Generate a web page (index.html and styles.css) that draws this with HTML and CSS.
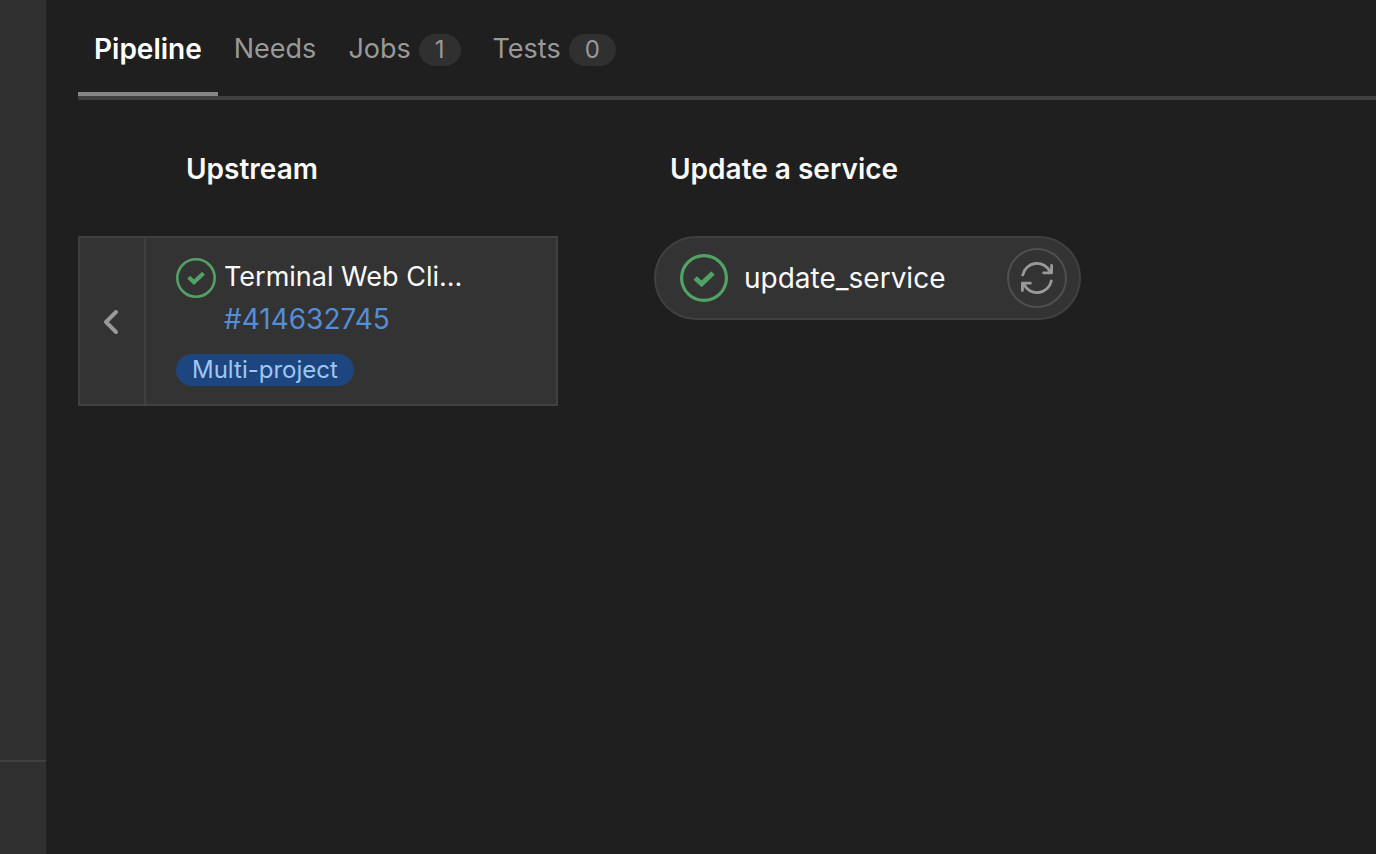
FILE: index.html
```html
<!DOCTYPE html>
<html lang="en">
<head>
<meta charset="utf-8">
<meta name="viewport" content="width=device-width, initial-scale=1">
<title>Pipeline</title>
<link rel="stylesheet" href="styles.css">
</head>
<body>
<div class="layout">
  <aside class="sidebar"><div class="sidebar-footer"></div></aside>
  <main class="content">
    <nav class="tabs" aria-label="Pipeline views">
      <a class="tab tab-active" href="#pipeline" aria-current="page">Pipeline</a>
      <a class="tab" href="#needs">Needs</a>
      <a class="tab" href="#jobs">Jobs<span class="count">1</span></a>
      <a class="tab" href="#tests">Tests<span class="count">0</span></a>
    </nav>
    <div class="graph">
      <section class="column upstream">
        <h2 class="column-title upstream-title">Upstream</h2>
        <div class="card">
          <button class="expand" type="button" aria-label="Expand upstream pipeline">
            <svg width="18" height="28" viewBox="0 0 18 28" fill="none" stroke="currentColor" stroke-width="4" stroke-linecap="round" stroke-linejoin="round" aria-hidden="true"><path d="M13 5 3 15l10 10"/></svg>
          </button>
          <div class="card-body">
            <div class="card-head">
              <svg class="status" width="40" height="40" viewBox="0 0 40 40" fill="none" stroke="currentColor" aria-hidden="true"><circle cx="20" cy="20" r="18.7" stroke-width="2.6"/><path d="m12.7 19.3 5.3 4.9 9.5-9" stroke-width="4.2"/></svg>
              <div class="card-text">
                <span class="card-name">Terminal Web Cli...</span>
                <a class="card-link" href="#414632745">#414632745</a>
              </div>
            </div>
            <span class="badge">Multi-project</span>
          </div>
        </div>
      </section>
      <section class="column stage">
        <h2 class="column-title">Update a service</h2>
        <div class="job">
          <svg class="status" width="48" height="48" viewBox="0 0 48 48" fill="none" stroke="currentColor" aria-hidden="true"><circle cx="24" cy="24" r="22.4" stroke-width="3.2"/><path d="m15.2 24 6.4 5.8 11.4-10.8" stroke-width="5"/></svg>
          <span class="job-name">update_service</span>
          <button class="retry" type="button" aria-label="Retry job">
            <svg width="34" height="34" viewBox="0 0 34 34" fill="none" stroke="currentColor" stroke-width="2.8" stroke-linecap="round" stroke-linejoin="round" aria-hidden="true"><path d="M2.7 14A14.6 14.6 0 0 1 30.2 10.8M31.6 4.4v7.4h-8M31.3 20A14.6 14.6 0 0 1 3.8 23.2M2.4 29.6v-7.4h8"/></svg>
          </button>
        </div>
      </section>
    </div>
  </main>
</div>
</body>
</html>
```
FILE: styles.css
```css
* {
  box-sizing: border-box;
}

body {
  margin: 0;
  background: #1f1f1f;
  color: #fafafa;
  font-family: Inter, "Liberation Sans", sans-serif;
  font-size: 27px;
  line-height: 42px;
}

button {
  margin: 0;
  padding: 0;
  border: 0;
  background: none;
  color: #999;
  cursor: pointer;
}

a {
  text-decoration: none;
}

svg {
  display: block;
  flex: none;
}

.layout {
  display: flex;
  min-height: 100vh;
}

.sidebar {
  display: flex;
  flex: none;
  flex-direction: column;
  justify-content: flex-end;
  width: 46px;
  background: #303030;
}

.sidebar-footer {
  height: 94px;
  border-top: 2px solid #404040;
}

.content {
  flex: 1;
  min-width: 0;
  padding-left: 32px;
}

.tabs {
  display: flex;
  border-bottom: 4px solid #404040;
}

.tab {
  display: flex;
  align-items: center;
  gap: 8px;
  height: 96px;
  padding: 6px 16px 0;
  border-bottom: 4px solid transparent;
  color: #999;
}

.tab-active {
  border-color: #868686;
  color: #fff;
  font-size: 28px;
  font-weight: 600;
}

.count {
  margin-top: 2px;
  padding: 0 16px;
  border-radius: 16px;
  background: #303030;
  font-size: 24px;
  line-height: 32px;
}

.graph {
  display: flex;
  align-items: flex-start;
  gap: 96px;
  padding-top: 48px;
}

.upstream {
  width: 480px;
}

.stage {
  width: 427px;
}

.column-title {
  margin: 0 0 46px;
  padding: 0 16px;
  font-size: 28px;
  font-weight: 600;
}

.upstream-title {
  padding-left: 108px;
}

.card {
  display: flex;
  border: 2px solid #404040;
  background: #333;
}

.expand {
  display: flex;
  align-items: center;
  justify-content: center;
  width: 66px;
  border-right: 2px solid #404040;
}

.card-body {
  flex: 1;
  padding: 18px 30px;
}

.card-head {
  display: flex;
  gap: 8px;
  margin-bottom: 14px;
}

.card-head .status {
  margin-top: 2px;
}

.status {
  color: #52a165;
}

.card-text {
  display: flex;
  flex-direction: column;
}

.card-link {
  color: #548dd8;
  font-size: 28px;
}

.badge {
  display: block;
  width: fit-content;
  padding: 0 16px;
  border-radius: 16px;
  background: #1d4580;
  color: #9dc7f1;
  font-size: 24px;
  line-height: 32px;
}

.job {
  display: flex;
  align-items: center;
  gap: 16px;
  height: 84px;
  padding: 0 12px 0 24px;
  border: 2px solid #404040;
  border-radius: 42px;
  background: #333;
}

.job-name {
  flex: 1;
  font-size: 28px;
}

.retry {
  display: flex;
  align-items: center;
  justify-content: center;
  width: 60px;
  height: 60px;
  border: 2px solid #4f4f4f;
  border-radius: 50%;
}
```
